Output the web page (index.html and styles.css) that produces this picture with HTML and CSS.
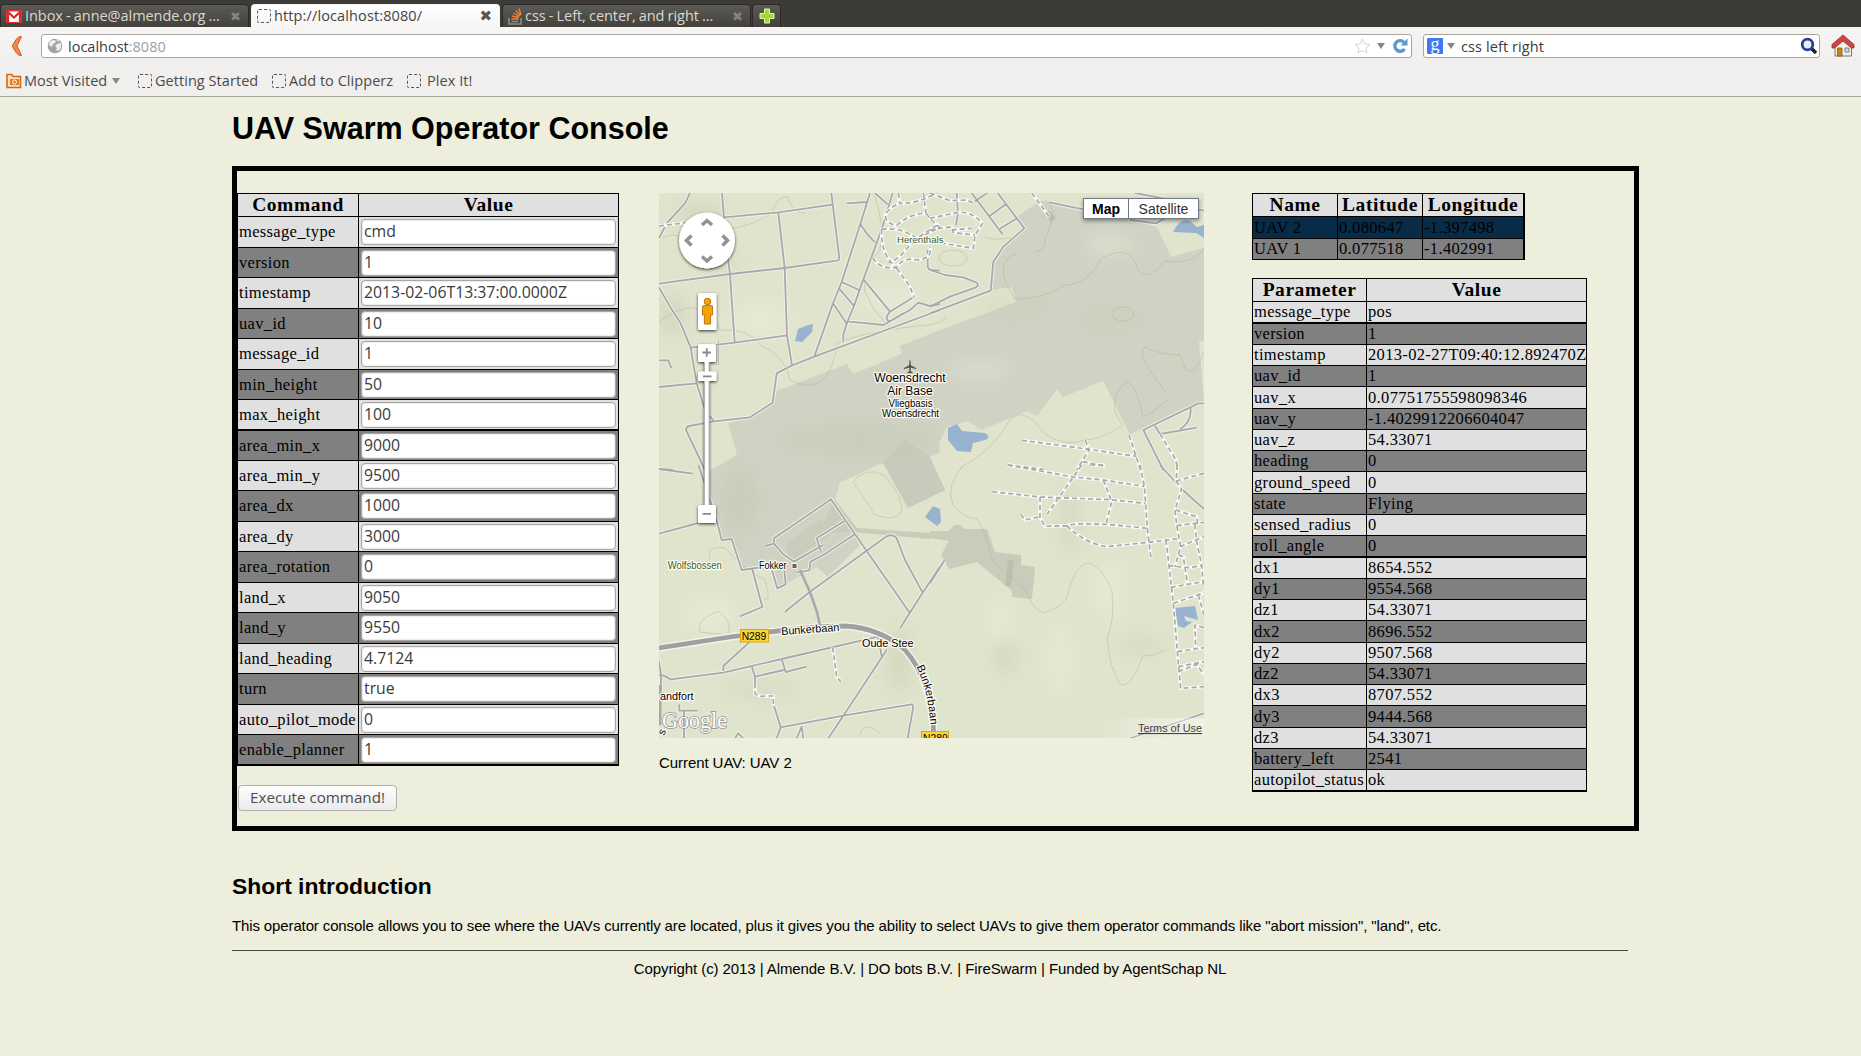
FILE: index.html
```html
<!DOCTYPE html>
<html lang="en">
<head>
<meta charset="utf-8">
<title>UAV Swarm Operator Console</title>
<link rel="stylesheet" href="styles.css">
</head>
<body>
<header class="browser">
  <div class="tabs">
    <div class="tab">
      <svg class="ico" width="16" height="13" viewBox="0 0 16 13"><rect width="16" height="13" rx="1" fill="#e5322d"/><path d="M3 1.500h10V12H3z" fill="#fff"/><path d="M2 12V2l6 5.500L14 2v10" fill="none" stroke="#d82824" stroke-width="2.200"/></svg>
      <span class="label t1">Inbox - anne@almende.org ...</span><span class="x">✖</span>
    </div>
    <div class="tab active">
      <i class="blank"></i><span class="label t2">http://localhost:8080/</span><span class="x">✖</span>
    </div>
    <div class="tab">
      <svg class="ico" width="14" height="17" viewBox="0 0 14 17"><path d="M1 10v6h12v-6M3.500 13.500h7" fill="none" stroke="#8c8c86" stroke-width="1.700"/><path d="M3.500 11h7M4 8l6.800 1.500M5.500 5l6 3.400M8 2.500l4.500 5M11 .5l2 6" stroke="#ef8236" stroke-width="1.400"/></svg>
      <span class="label t3">css - Left, center, and right ...</span><span class="x">✖</span>
    </div>
    <div class="tab new"><svg width="16" height="16" viewBox="0 0 16 16"><path d="M5.500 1h5v4.500H15v5h-4.500V15h-5v-4.500H1v-5h4.500z" fill="#a5d633" stroke="#e7f5b5" stroke-width="1"/></svg></div>
  </div>
  <div class="nav">
    <svg class="back" width="14" height="22" viewBox="0 0 14 22"><path d="M11.500 1.500Q8 1.500 6.500 4L3 9.500q-1 1.500 0 3L6.500 18q1.500 2.500 5 2.500l-4.500-9.500z" fill="#f08a4b" stroke="#d3541c"/></svg>
    <div class="field url">
      <svg width="16" height="16" viewBox="0 0 16 16"><circle cx="8" cy="8" r="7.300" fill="#a3a3a3"/><path d="M3 3l4-1 2 1-1 2-2 1-1 3-3-2zM10 6l4-1v5l-3 3-2-1 1-2-2-2zM9 1l3 1-1 2z" fill="#eee"/></svg>
      <span class="addr">localhost<em>:8080</em></span>
      <svg class="star" width="17" height="16" viewBox="0 0 17 16"><path d="M8.500 1l2.200 4.800 5.300.6-4 3.500 1.100 5.200-4.600-2.700-4.600 2.700L5 9.900 1 6.400l5.300-.6z" fill="#fff" stroke="#d4d4d4"/></svg>
      <i class="caret"></i>
      <svg class="reload" width="16" height="16" viewBox="0 0 16 16"><path d="M12 4.300A5.300 5.300 0 1 0 12.500 11" fill="none" stroke="#5b98cd" stroke-width="3.400"/><path d="M15.500.5v7H8.500z" fill="#5b98cd"/></svg>
    </div>
    <div class="field search">
      <span class="g">g</span><i class="caret"></i><span class="query">css left right</span>
      <svg width="18" height="18" viewBox="0 0 18 18"><path d="M11 11l5 5" stroke="#222" stroke-width="3.600"/><circle cx="7.500" cy="7.500" r="5.300" fill="#e6eefa" stroke="#2b3f94" stroke-width="2.800"/></svg>
    </div>
    <svg class="home" width="24" height="24" viewBox="0 0 24 24"><path d="M4 11v11h16.500V11L12 4z" fill="#f0f0ec" stroke="#777"/><path d="M6.500 14H11v8H6.500z" fill="#c8860c" stroke="#8e5c06" stroke-width=".8"/><path d="M14 14h4v4h-4z" fill="#cfdbe0" stroke="#71858c"/><path d="M12 1L1 10.500V14h2.500L12 7l8.500 7H23v-3.500z" fill="#cf4646" stroke="#9e2323" stroke-width=".8"/></svg>
  </div>
  <div class="bookmarks">
    <span class="bm b1"><svg width="16" height="16" viewBox="0 0 16 16"><path d="M1 14.500v-13h5l1 2h7.500v11z" fill="#fae0c6" stroke="#d4690f" stroke-width="1.600"/><path d="M4 12V6h9v6z" fill="#dd7d2a"/><circle cx="8.500" cy="9" r="2" fill="none" stroke="#fff"/></svg>Most Visited<i class="caret"></i></span>
    <span class="bm b2"><i class="blank"></i>Getting Started</span>
    <span class="bm b3"><i class="blank"></i>Add to Clipperz</span>
    <span class="bm b4"><i class="blank"></i>Plex It!</span>
  </div>
</header>

<main class="page">
  <h1>UAV Swarm Operator Console</h1>
  <section class="console">
    <form class="command">
      <table class="cmd">
        <tr><th>Command</th><th>Value</th></tr>
        <tr><td>message_type</td><td><input value="cmd"></td></tr>
        <tr><td>version</td><td><input value="1"></td></tr>
        <tr><td>timestamp</td><td><input value="2013-02-06T13:37:00.0000Z"></td></tr>
        <tr><td>uav_id</td><td><input value="10"></td></tr>
        <tr><td>message_id</td><td><input value="1"></td></tr>
        <tr><td>min_height</td><td><input value="50"></td></tr>
        <tr class="thick"><td>max_height</td><td><input value="100"></td></tr>
        <tr><td>area_min_x</td><td><input value="9000"></td></tr>
        <tr><td>area_min_y</td><td><input value="9500"></td></tr>
        <tr><td>area_dx</td><td><input value="1000"></td></tr>
        <tr><td>area_dy</td><td><input value="3000"></td></tr>
        <tr><td>area_rotation</td><td><input value="0"></td></tr>
        <tr><td>land_x</td><td><input value="9050"></td></tr>
        <tr><td>land_y</td><td><input value="9550"></td></tr>
        <tr><td>land_heading</td><td><input value="4.7124"></td></tr>
        <tr><td>turn</td><td><input value="true"></td></tr>
        <tr><td>auto_pilot_mode</td><td><input value="0"></td></tr>
        <tr class="thick"><td>enable_planner</td><td><input value="1"></td></tr>
      </table>
      <button type="button" class="execute">Execute command!</button>
    </form>

    <div class="center">
      <div class="map">
        <svg class="canvas" width="545" height="545" viewBox="659 193 545 545">
          <defs>
            <filter id="soft" x="-50%" y="-50%" width="200%" height="200%"><feGaussianBlur stdDeviation="9"/></filter>
            <filter id="shade" x="-30%" y="-30%" width="160%" height="160%"><feDropShadow dx="0" dy="1.200" stdDeviation="1.500" flood-opacity=".75"/></filter>
            <linearGradient id="fade"><stop offset="0" stop-color="#fff" stop-opacity="0"/><stop offset="1" stop-color="#fff" stop-opacity=".5"/></linearGradient>
            <g id="roads">
              <g transform="translate(650 180) scale(.33333)">
                <path d="M120 39L105 70 50 130 27 175M216 39L228 190 240 282 254 488M222 112L385 97 548 74M544 39L568 235Q567 242 560 242L404 264 240 282 27 311M385 97L404 264 411 466 426 556M27 322L60 380 92 430 122 503 140 610 165 690 192 724M122 503L254 488 411 466M27 541H55L64 564M27 621L140 610M27 867L70 870M165 870L108 750Q108 740 118 738L192 724 300 712 368 668 380 580 426 556 493 530 870 390M660 39L631 132 575 306 549 370 493 530M728 39L695 148 640 298 612 378 590 430 580 465V486M590 70L650 66M675 39L713 73M631 132L650 160 675 187M575 306L627 330M567 325L612 378M549 370L592 434M640 298L720 395 790 352M595 425L630 428 700 435 780 390 805 368 840 378 870 372M720 395Q700 420 720 424L760 400M833 210V260Q835 268 843 270L870 272"/>
              </g>
              <g transform="translate(930 180) scale(.33333)">
                <path d="M80 39L84 100 78 135M0 270L45 285 100 292 140 308Q148 315 138 322L60 350 0 380M0 400L182 332 190 245 220 200 283 145 203 39M125 39L218 163M135 64L172 39M180 107L228 72M210 146L262 114M358 67L460 88M600 120L678 130 710 112M615 39L700 55M800 88L822 92M822 670H805L640 750 700 870M675 737L690 762 800 743M782 685Q785 725 750 748"/>
              </g>
              <g transform="translate(650 465) scale(.33333)">
                <path d="M27 12L128 26M145 0L165 60 200 165 215 225 245 222 275 315 325 308M27 206L145 174M346 243L372 236V220L543 103 615 208 780 445M583 168L500 220 513 260M372 236L400 268 432 290 520 240M615 208L520 270 482 290 478 316 440 322M405 440L480 380 710 214Q730 205 740 220L765 285 818 383M750 490L818 383 870 305M307 313L337 426 269 454M365 313L382 370 407 358 403 313M300 530L220 603V618M27 630L42 632 62 643 220 623 395 582 685 515 695 575M305 602L315 635 402 615M315 635V655M395 582L407 621 470 605M372 722L392 787 380 820M392 787L580 752 785 718Q792 720 789 730L773 820M710 555L580 752 535 820M440 820L455 785 460 820M255 820L265 805 280 820M27 590L33 630V680M88 718V737H143M102 737V820"/>
              </g>
              <g transform="translate(930 465) scale(.33333)">
                <path d="M0 355L44 285M690 0L755 72 822 132M600 820L822 745"/>
              </g>
            </g>
            <g id="tracks">
              <g transform="translate(650 180) scale(.33333)">
                <path d="M27 138L105 128M745 39Q750 75 750 70 800 72 860 39M820 39L828 100Q780 100 740 136 700 130 708 98 730 75 750 70M828 100Q860 140 870 142 800 175 775 200 745 240 715 248M695 148Q750 140 800 175L870 130M695 148Q690 220 740 265M668 233Q690 270 740 262 760 230 800 240 850 235 840 200M740 265L780 320 792 352"/>
              </g>
              <g transform="translate(930 180) scale(.33333)">
                <path d="M0 39L60 62 110 60 130 70M0 115L80 98Q120 90 158 130L135 165 130 205 40 190M0 150L65 140 70 158 135 165M65 150L125 145M305 39L358 110M276 781L420 800 620 829M466 780L477 810 440 870M233 855L340 868M458 845L525 859M597 765L625 850 632 870M690 762L738 840 742 870"/>
              </g>
              <g transform="translate(650 465) scale(.33333)">
                <path d="M548 547L560 635 572 650M315 655V685Q330 697 345 693H370V722"/>
              </g>
              <g transform="translate(930 465) scale(.33333)">
                <path d="M233 0L430 36 520 45 643 64M480 0H525M455 0L430 36 352 147M630 0L643 64 652 190 663 280M187 80L330 96 540 104 646 115M330 96V158L345 184 410 182 440 176 530 178 652 190M272 148L285 165 330 155M520 45L545 110 528 178M410 182Q465 235 530 245L655 232 745 221M742 0L738 48 755 72 735 135 740 180 752 245 735 305M738 48L822 25M737 135L800 155 803 178M740 182L822 172M795 178L800 230 815 300 820 360M750 245L822 215M745 270L760 275 772 355M715 302L775 308 815 302M722 367L820 350M708 225L730 415 742 560 752 670 822 665M730 415L822 383M805 390L822 450M822 488L795 480 797 550M742 560L822 548M745 605L822 590M745 620L800 598 822 630"/>
              </g>
            </g>
          </defs>
          <rect x="659" y="193" width="545" height="545" fill="#e0e4cd"/>
          <path d="M930 334L900 345.700 902 354 853 374 847 364 777 391 773 403 750 417 728 423 737 455 713 469 709 472 705 485 722 540 732 539 742 569 773 568 778 590 787 583 817 567 828 577 855 550 863 542 853 528 835 500 840 482 857 475 877 465 883 463 888 470 908 508 945 490 932 466 930 457 940 452 939 443 947 427 967 421 982 430 1027 411 1037 416 1057 389 1063 397 1103 381 1130 434 1192 407 1204 402 1199 342 1204 340V248L1171 257 1157 227 1130 220 1057 203 1040 201 1018 216 1024 228 1003 247 993 262 992 290 1012 287 1016 302z" fill="#d0d2c3"/>
          <path d="M883 463L908 508 945 490 930 457 905 440z" fill="#c8cabb"/>
          <g fill="#c9ccba">
            <path d="M786 543L821 519 831 534 790 562z"/>
            <path d="M818 533L835 500 857 528 930 533V539L853 532z"/>
            <path d="M930 531L949 531Q957 519 964 529H987L995 552 1021 555V565L1035 567 1032 599 1012 597V591L977 562 949 569 941 555 949 541 930 538z"/>
            <path d="M1008 560H1014L1011 586H1005zM1048 210l8 8-5 4-6-8z" fill="#bcbfae"/>
          </g>
          <g filter="url(#soft)" opacity=".36">
            <g fill="#bfc4aa"><ellipse cx="700" cy="215" rx="25" ry="12"/><ellipse cx="672" cy="315" rx="14" ry="22"/><ellipse cx="720" cy="262" rx="22" ry="7"/><ellipse cx="1010" cy="308" rx="40" ry="5"/><ellipse cx="1110" cy="320" rx="35" ry="5"/><ellipse cx="860" cy="440" rx="80" ry="12"/><ellipse cx="740" cy="500" rx="16" ry="35"/><ellipse cx="1005" cy="655" rx="12" ry="20"/><ellipse cx="1140" cy="645" rx="24" ry="7"/><ellipse cx="900" cy="660" rx="12" ry="35"/><ellipse cx="1070" cy="520" rx="8" ry="35"/><ellipse cx="760" cy="690" rx="40" ry="6"/></g>
            <g fill="#f1f3e2"><ellipse cx="760" cy="320" rx="35" ry="14"/><ellipse cx="890" cy="300" rx="30" ry="12"/><ellipse cx="1110" cy="245" rx="25" ry="10"/><ellipse cx="980" cy="370" rx="30" ry="8"/><ellipse cx="710" cy="615" rx="28" ry="14"/><ellipse cx="1000" cy="620" rx="10" ry="24"/><ellipse cx="1060" cy="660" rx="10" ry="35"/><ellipse cx="1110" cy="590" rx="14" ry="28"/></g>
          </g>
          <g fill="none" stroke="#b9ae91" stroke-width=".9" opacity=".5">
            <path d="M662 238Q675 230 690 242M730 229Q755 225 772 213 777 195 788 197 792 213 805 213M874 193Q885 225 880 250 860 270 865 292 875 315 893 330M659 322Q700 290 720 330 750 328 760 345 785 355 790 380 830 400 837 343 870 330 930 325 950 320 945 315"/>
            <ellipse cx="953" cy="258" rx="14" ry="8"/><ellipse cx="1123" cy="314" rx="11" ry="7"/>
            <path d="M1035 252Q1047 250 1045 238 1060 210 1045 200M985 237Q995 242 1018 236M1018 253Q990 262 1015 299 1040 300 1065 285 1088 285 1100 260 1130 240 1138 270 1148 282 1165 261 1195 265 1204 248M1167 393Q1135 355 1145 347 1160 355 1180 355 1190 390 1204 352M1167 400Q1150 415 1143 417 1135 380 1125 382 1105 405 1123 425 1100 440 1085 440 1070 445 1057 440 1045 437 1035 422 1015 405 1005 428 990 452 960 468"/>
            <path d="M964 465Q945 485 953 505 962 517 977 519 984 525 992 560L1025 590Q1035 612 1043 613 1060 608 1067 598 1075 562 1090 563 1105 570 1112 592 1115 620 1107 638 1110 670 1120 684 1130 690 1143 656 1155 656 1165 650 1178 648M1178 680L1163 699Q1130 692 1133 710L1135 725"/>
            <path d="M710 560Q705 545 725 548 745 570 765 580 772 605 763 598M700 632Q695 620 718 611 735 625 727 635zM853 482Q865 466 884 475 903 495 902 512 895 522 875 515zM860 735Q865 720 880 733"/>
          </g>
          <g fill="#98b3cf"><path d="M795 341L798 329 808 325 813 324 812 332 802 342zM948 428L957 424 962 431 985 433Q992 437 985 440L973 443 971 452 957 451 948 440zM925 517L933 506 940 509 941 522 937 526zM1173 232Q1180 217 1190 221L1197 227 1204 225V238L1196 233zM1175 608L1195 606 1198 620 1184 616 1186 621 1192 622 1184 628 1178 626z"/></g>
          <use href="#roads" class="road-edge"/><use href="#roads" class="road"/>
          <use href="#tracks" class="track-edge"/><use href="#tracks" class="track"/>
          <g fill="none"><path d="M659 648L730 637Q810 626 845 626 880 628 905 650 932 680 934 738" stroke="#f4f5ea" stroke-width="7.500"/><path d="M659 648L730 637Q810 626 845 626 880 628 905 650 932 680 934 738" stroke="#a0a0a0" stroke-width="4.800"/><path d="M800 570L810 592 817 612 820 626" stroke="#a9a9ad" stroke-width="2.500"/><path d="M660 685V725" stroke="#a9a9ad" stroke-width="3"/></g>
          <g stroke="#d8a511" fill="#fcd535"><rect x="740.500" y="629.500" width="28" height="12.500"/><rect x="921.500" y="731.500" width="27" height="12.500"/></g>
          <path d="M909.500 359l1.500 4v3l5.500 3v1.600l-5.500-1.600v3l2 1.500v1h-6v-1l2-1.500v-3l-5.500 1.600V369l5.500-3v-3z" transform="translate(0 -1)" fill="#5b544c" stroke="#f4f4e8" stroke-width=".4"/>
          <path d="M792 563.500h5v5h-5z" fill="#6a6054" stroke="#f4f4e8"/>
          <g class="place">
            <text x="910" y="382" font-size="12.300" text-anchor="middle" textLength="71.500" lengthAdjust="spacingAndGlyphs">Woensdrecht</text>
            <text x="910" y="395.300" font-size="12.300" text-anchor="middle" textLength="45.500" lengthAdjust="spacingAndGlyphs">Air Base</text>
            <text x="910.500" y="407" font-size="10" text-anchor="middle" textLength="44" lengthAdjust="spacingAndGlyphs">Vliegbasis</text>
            <text x="910.500" y="417.300" font-size="10" text-anchor="middle" textLength="57" lengthAdjust="spacingAndGlyphs">Woensdrecht</text>
            <text x="759" y="569" font-size="10" textLength="27.500" lengthAdjust="spacingAndGlyphs">Fokker</text>
            <text x="862" y="646.500" font-size="11" textLength="51.500" lengthAdjust="spacingAndGlyphs">Oude Stee</text>
            <text x="660" y="699.500" font-size="10.500" textLength="33.500" lengthAdjust="spacingAndGlyphs">andfort</text>
            <text transform="translate(781.500 635) rotate(-4)" font-size="11" textLength="58" lengthAdjust="spacingAndGlyphs">Bunkerbaan</text>
            <path id="bend" d="M916.500 667Q928 690 930.500 726" fill="none" stroke="none"/>
            <text font-size="11"><textPath href="#bend" textLength="60">Bunkerbaan</textPath></text>
            <text x="741.700" y="640" font-size="10.300" class="shield">N289</text>
            <text x="923" y="741.500" font-size="10.300" class="shield">N289</text>
            <text transform="translate(664 736) rotate(-65)" font-size="11">s</text>
            <g fill="#38622b"><text x="897" y="242.700" font-size="9.700" textLength="46.500" lengthAdjust="spacingAndGlyphs">Herenthals</text><text x="667.700" y="569.300" font-size="10" textLength="54" lengthAdjust="spacingAndGlyphs">Wolfsbossen</text></g>
          </g>
          <rect x="1100" y="718" width="104" height="20" fill="url(#fade)"/>
          <text x="662" y="728" class="logo" textLength="65" lengthAdjust="spacingAndGlyphs">Google</text>
          <text x="1138" y="732" class="terms" textLength="64" lengthAdjust="spacingAndGlyphs">Terms of Use</text>
          <path d="M718.500 340v25" stroke="#aaa" stroke-width=".6"/>
          <g filter="url(#shade)" fill="#fff">
            <circle cx="707" cy="240.500" r="28"/>
            <rect x="704.500" y="360" width="4.500" height="150" stroke="#aaa" stroke-width=".8"/>
            <rect x="698" y="293" width="18.500" height="37" rx="1.500"/><rect x="698" y="344" width="18" height="18" rx="1.500"/><rect x="698" y="371.500" width="18.500" height="9.500" rx="1.500"/><rect x="698" y="505" width="18" height="18" rx="1.500"/>
          </g>
          <path d="M702 225l5-4.500 5 4.500M702 256.500l5 4.500 5-4.500M691.500 235.500l-5 5 5 5M722.500 235.500l5 5-5 5" fill="none" stroke="#929292" stroke-width="3.500"/>
          <path d="M702.500 352.500h8.500M706.750 348.200v8.600M703 376.300h8.500M702.500 513.800h8.500" stroke="#888" stroke-width="1.800"/>
          <g fill="#f4a400" stroke="#b86c08" stroke-width=".9"><path d="M702.500 306q5-2 10 0v9h-1.900v9h-6.200v-9h-1.900z"/><circle cx="707.500" cy="301.500" r="3.300"/></g>
        </svg>
        <div class="types"><button type="button" class="on">Map</button><button type="button">Satellite</button></div>
      </div>
      <p class="current">Current UAV: UAV 2</p>
    </div>

    <div class="status">
      <table class="uavs">
        <tr><th>Name</th><th>Latitude</th><th>Longitude</th></tr>
        <tr class="selected"><td>UAV 2</td><td>0.080647</td><td>-1.397498</td></tr>
        <tr><td>UAV 1</td><td>0.077518</td><td>-1.402991</td></tr>
      </table>
      <table class="params">
        <tr><th>Parameter</th><th>Value</th></tr>
        <tr class="tall thick"><td>message_type</td><td>pos</td></tr>
        <tr><td>version</td><td>1</td></tr>
        <tr><td>timestamp</td><td>2013-02-27T09:40:12.892470Z</td></tr>
        <tr><td>uav_id</td><td>1</td></tr>
        <tr class="tall"><td>uav_x</td><td>0.07751755598098346</td></tr>
        <tr><td>uav_y</td><td>-1.4029912206604047</td></tr>
        <tr><td>uav_z</td><td>54.33071</td></tr>
        <tr><td>heading</td><td>0</td></tr>
        <tr class="tall"><td>ground_speed</td><td>0</td></tr>
        <tr><td>state</td><td>Flying</td></tr>
        <tr><td>sensed_radius</td><td>0</td></tr>
        <tr class="tall thick"><td>roll_angle</td><td>0</td></tr>
        <tr><td>dx1</td><td>8654.552</td></tr>
        <tr><td>dy1</td><td>9554.568</td></tr>
        <tr><td>dz1</td><td>54.33071</td></tr>
        <tr class="tall"><td>dx2</td><td>8696.552</td></tr>
        <tr><td>dy2</td><td>9507.568</td></tr>
        <tr><td>dz2</td><td>54.33071</td></tr>
        <tr><td>dx3</td><td>8707.552</td></tr>
        <tr class="tall"><td>dy3</td><td>9444.568</td></tr>
        <tr><td>dz3</td><td>54.33071</td></tr>
        <tr><td>battery_left</td><td>2541</td></tr>
        <tr class="tall thick"><td>autopilot_status</td><td>ok</td></tr>
      </table>
    </div>
  </section>
  <h2>Short introduction</h2>
  <p class="intro">This operator console allows you to see where the UAVs currently are located, plus it gives you the ability to select UAVs to give them operator commands like "abort mission", "land", etc.</p>
  <footer>Copyright (c) 2013 | Almende B.V. | DO bots B.V. | FireSwarm | Funded by AgentSchap NL</footer>
</main>
</body>
</html>
```
FILE: styles.css
```css
* { box-sizing: border-box; }
body { margin: 0; height: 1056px; overflow: hidden; background: #edeedc; color: #000; font: 15px "Liberation Sans", Arial, sans-serif; }

/* browser chrome */
.browser { height: 97px; background: linear-gradient(#f6f5f4 27px, #f1f0ee 60px, #f0efed); border-bottom: 1px solid #a5a5a0; font: 14.5px "Open Sans", sans-serif; color: #4b4b4b; }
.tabs { display: flex; gap: 2px; height: 27px; padding-top: 4px; background: #3c3b37; }
.tab { display: flex; align-items: center; width: 249px; height: 23px; padding: 0 7px 0 5px; background: linear-gradient(#5b5a55, #42413c); border-radius: 4px 4px 0 0; border: 1px solid #2b2a27; border-bottom: 0; color: #dcd8cf; }
.tab.active { background: linear-gradient(#fff, #f6f5f4); border-color: #f6f5f4; color: #444; }
.tab.new { width: 29px; justify-content: center; padding: 0; margin-left: -1px; }
.label { flex: 1; margin-left: 3px; white-space: nowrap; line-height: 20px; }
.t1, .t3 { letter-spacing: -.06px; word-spacing: -.5px; }
.t2 { letter-spacing: .12px; }
.x { font: 13px "DejaVu Sans", sans-serif; color: #85837d; }
.active .x { font-size: 15px; color: #555; }
.ico { flex: none; }
.blank { display: inline-block; flex: none; width: 14px; height: 14px; border: 1px dashed #555; border-radius: 2px; }
.nav { display: flex; align-items: center; height: 38px; padding: 0 6px 0 10px; }
.back { margin-right: 17px; }
.field { display: flex; align-items: center; height: 24px; border: 1px solid #a9a69f; border-radius: 3px; background: #fff; color: #3c3c3c; }
.url { width: 1371px; padding: 0 3px 0 5px; }
.addr { flex: 1; margin-left: 5px; }
.addr em { font-style: normal; color: #a0a0a0; }
.caret { display: inline-block; border: 4px solid transparent; border-top: 6px solid #8a8882; border-bottom: 0; }
.star { margin-right: 6px; }
.url .caret { margin-right: 7px; }
.search { width: 397px; margin-left: 11px; padding: 0 1px 0 3px; }
.g { width: 16px; height: 16px; background: #3f78f0; border-radius: 1px; color: #fff; font: 18px/12px "Liberation Serif", serif; text-align: center; }
.search .caret { margin: 0 6px 0 4px; }
.query { flex: 1; letter-spacing: .1px; }
.home { margin-left: 11px; }
.bookmarks { display: flex; height: 31px; padding: 0 6px; align-items: center; letter-spacing: .05px; }
.bm { display: flex; align-items: center; gap: 3px; white-space: nowrap; }
.b1 { width: 132px; gap: 2px; }
.b2 { width: 134px; }
.b3 { width: 135px; }
.b4 { gap: 6px; }
.b1 .caret { margin-left: 3px; }

/* page */
.page { width: 1396px; margin-left: 232px; }
h1 { height: 69px; margin: 0; padding-top: 14px; font-size: 30.5px; line-height: 35px; white-space: nowrap; }
.console { display: flex; width: 1407px; height: 665px; border: 5px solid #000; padding-top: 22px; }
.command { width: 422px; }
table { border-spacing: 0; table-layout: fixed; border: solid #000; border-width: 1px 0 0 1px; font: 16.5px/18px "Liberation Serif", serif; }
th, td { padding: 0 1px; border: solid #000; border-width: 0 1px 1px 0; white-space: nowrap; letter-spacing: .34px; background: #e0e0e0; }
th { height: 23px; font-size: 19.5px; line-height: 20px; letter-spacing: .55px; }
.thick td { border-bottom-width: 2px; }
tr:nth-child(odd) td { background: #808080; }
.cmd { width: 382px; }
.cmd th:first-child { width: 121px; }
.cmd td { height: 30px; }
.cmd tr:nth-child(2) td, .cmd tr:nth-child(4) td, .cmd tr:nth-child(6) td, .cmd tr:nth-child(8) td, .cmd tr:nth-child(n+11):nth-child(odd) td { height: 31px; }
.cmd td + td { padding: 0 2px; }
input { display: block; width: 255px; height: 26px; margin: 0; padding: 0 3px 2px 2px; border: 1px solid #aaa7a2; border-radius: 4px; background: #fff; box-shadow: inset 0 0 1px 1px #eee; color: #3a3a3a; font: 15.800px "Open Sans", sans-serif; }
.execute { display: block; width: 159px; height: 26px; margin: 19px 0 0 1px; padding: 0 0 2px; border: 1px solid #b2b0aa; border-radius: 4px; background: linear-gradient(#fdfdfd, #ebebeb); color: #4c4c4c; font: 15.200px "Open Sans", sans-serif; white-space: nowrap; }
.center { width: 593px; }
.map { position: relative; width: 545px; height: 545px; overflow: hidden; }
.canvas { display: block; font-family: "Liberation Sans", Arial, sans-serif; }
.current { margin: 16px 0 0; line-height: 18px; letter-spacing: -.07px; }
.types { position: absolute; top: 5px; right: 5px; display: flex; width: 116px; height: 21px; box-shadow: 0 2px 4px rgba(0,0,0,.4); }
.types button { flex: 1; padding: 0; border: 1px solid #717b87; background: #fff; color: #333; font: 14px "Liberation Sans", Arial, sans-serif; }
.types .on { flex: 0 0 46px; margin-right: -1px; color: #000; font-weight: bold; }
.uavs { width: 273px; }
.uavs td { height: 21px; }
.uavs .selected td { height: 22px; background: #082c47; }
.uavs th { width: 85px; }
.uavs th:last-child { width: 102px; }
.uavs tr > :last-child { border-right-width: 2px; }
.params { width: 335px; margin-top: 18px; }
.params th:first-child { width: 114px; }
.params td { height: 21px; }
.params .tall td { height: 22px; }
h2 { margin: 41px 0 0; font-size: 22.900px; line-height: 28px; }
.intro { margin: 17px 0 0; padding-bottom: 15px; border-bottom: 1px solid #444; line-height: 18px; letter-spacing: -.126px; white-space: nowrap; }
footer { margin-top: 9px; line-height: 18px; letter-spacing: -.085px; text-align: center; white-space: nowrap; }

/* map drawing */
.road-edge, .road, .track-edge, .track { fill: none; stroke-linejoin: round; }
.road-edge { stroke: #f0f1e6; stroke-width: 11; }
.road { stroke: #a9a9ad; stroke-width: 5.500; }
.track-edge { stroke: #fafaf6; stroke-width: 10; }
.track { stroke: #a8a8a8; stroke-width: 5; stroke-dasharray: 15 9; }
.place { stroke: #fbfbf2; stroke-width: 2.500px; paint-order: stroke; stroke-linejoin: round; }
.shield { stroke: none; }
.logo { font: 24px "Liberation Serif", serif; fill: #fff; stroke: #909090; stroke-width: 1.500px; paint-order: stroke; }
.terms { font-size: 11px; fill: #444; text-decoration: underline; }
```
